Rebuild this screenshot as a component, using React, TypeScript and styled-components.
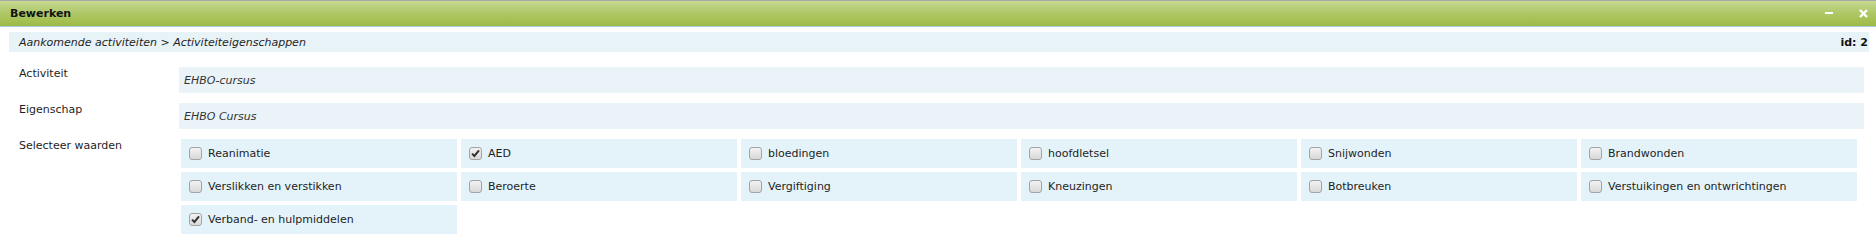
import React, { useState } from "react";
import styled, { createGlobalStyle } from "styled-components";

type Option = {
  id: number;
  name: string;
  isChecked: boolean;
};

const OptionDemo: Option[] = [
  { id: 1, name: "Reanimatie", isChecked: false },
  { id: 2, name: "AED", isChecked: true },
  { id: 3, name: "bloedingen", isChecked: false },
  { id: 4, name: "hoofdletsel", isChecked: false },
  { id: 5, name: "Snijwonden", isChecked: false },
  { id: 6, name: "Brandwonden", isChecked: false },
  { id: 7, name: "Verslikken en verstikken", isChecked: false },
  { id: 8, name: "Beroerte", isChecked: false },
  { id: 9, name: "Vergiftiging", isChecked: false },
  { id: 10, name: "Kneuzingen", isChecked: false },
  { id: 11, name: "Botbreuken", isChecked: false },
  { id: 12, name: "Verstuikingen en ontwrichtingen", isChecked: false },
  { id: 13, name: "Verband- en hulpmiddelen", isChecked: true },
];

const GlobalStyle = createGlobalStyle`
  html, body {
    margin: 0;
    padding: 0;
    background: #fff;
  }
  body {
    font-family: "DejaVu Sans", Verdana, sans-serif;
    font-size: 11px;
    color: #1e1e1e;
  }
`;

const Window = styled.div`
  width: 1876px;
`;

const TitleBar = styled.div`
  height: 25px;
  border-top: 1px solid #a9a9a9;
  border-bottom: 1px solid #a9cbe0;
  background: linear-gradient(to bottom, #c6da92 0%, #b0c96a 45%, #9dbb45 100%);
  display: flex;
  align-items: center;
  padding: 0 8px 0 10px;
`;

const Title = styled.div`
  flex: 1;
  font-weight: bold;
  font-size: 11px;
  color: #141414;
`;

const TitleControls = styled.div`
  display: flex;
  align-items: center;
  gap: 25px;
`;

const ControlButton = styled.span`
  display: flex;
  align-items: center;
  justify-content: center;
  width: 9px;
  height: 10px;
  cursor: pointer;
`;

const Content = styled.div`
  padding: 5px 7px 0 9px;
`;

const Breadcrumb = styled.div`
  height: 20px;
  background: #e8f3f8;
  display: flex;
  align-items: center;
  padding: 0 1px 0 10px;
`;

const BreadcrumbPath = styled.div`
  flex: 1;
  font-style: italic;
  color: #1e1e1e;
`;

const RecordId = styled.div`
  font-weight: bold;
  color: #111;
`;

const Form = styled.div`
  padding: 15px 0 0 10px;
  display: flex;
  flex-direction: column;
  gap: 10px;
`;

const FormRow = styled.div`
  display: grid;
  grid-template-columns: 160px 1fr;
`;

const FieldLabel = styled.div`
  padding-top: 0;
  line-height: 14px;
  color: #1e1e1e;
`;

const ReadOnlyField = styled.div`
  height: 26px;
  margin-right: 5px;
  background: #eaf3f7;
  display: flex;
  align-items: center;
  padding-left: 5px;
  font-style: italic;
  color: #333;
`;

const OptionGrid = styled.div`
  display: grid;
  grid-template-columns: repeat(6, 1fr);
  gap: 4px;
  margin: 0 12px 0 2px;
`;

const OptionCell = styled.label`
  height: 29px;
  background: #e4f3f9;
  display: flex;
  align-items: center;
  gap: 6px;
  padding-left: 8px;
  cursor: pointer;
  color: #1e1e1e;
`;

const HiddenInput = styled.input`
  display: none;
`;

const Box = styled.span`
  width: 11px;
  height: 11px;
  border: 1px solid #a3a3a3;
  border-radius: 3px;
  background: linear-gradient(to bottom, #f2f2f2, #d9d9d9);
  display: flex;
  align-items: center;
  justify-content: center;
  flex-shrink: 0;
`;

const CheckBox = ({
  checked,
  onChange,
}: {
  checked: boolean;
  onChange: (e: React.ChangeEvent<HTMLInputElement>) => void;
}) => (
  <>
    <HiddenInput type="checkbox" checked={checked} onChange={onChange} />
    <Box>
      {checked && (
        <svg width="9" height="9" viewBox="0 0 9 9">
          <path d="M1 4.6 L3.4 7 L8 1.4" stroke="#333" strokeWidth="2" fill="none" />
        </svg>
      )}
    </Box>
  </>
);

export default function App() {
  const [options, setOptions] = useState<Option[]>(OptionDemo);

  const handleCheck = (e: React.ChangeEvent<HTMLInputElement>, id: number) => {
    setOptions(options.map((o) => (o.id === id ? { ...o, isChecked: e.target.checked } : o)));
  };

  return (
    <>
      <GlobalStyle />
      <Window>
        <TitleBar>
          <Title>Bewerken</Title>
          <TitleControls>
            <ControlButton>
              <svg width="9" height="10" viewBox="0 0 9 10">
                <rect x="0" y="3" width="8" height="2" fill="#fff" />
              </svg>
            </ControlButton>
            <ControlButton>
              <svg width="9" height="9" viewBox="0 0 9 9">
                <path d="M1 1 L8 8 M8 1 L1 8" stroke="#fff" strokeWidth="2.4" />
              </svg>
            </ControlButton>
          </TitleControls>
        </TitleBar>
        <Content>
          <Breadcrumb>
            <BreadcrumbPath>Aankomende activiteiten &gt; Activiteiteigenschappen</BreadcrumbPath>
            <RecordId>id: 2</RecordId>
          </Breadcrumb>
          <Form>
            <FormRow>
              <FieldLabel>Activiteit</FieldLabel>
              <ReadOnlyField>EHBO-cursus</ReadOnlyField>
            </FormRow>
            <FormRow>
              <FieldLabel>Eigenschap</FieldLabel>
              <ReadOnlyField>EHBO Cursus</ReadOnlyField>
            </FormRow>
            <FormRow>
              <FieldLabel>Selecteer waarden</FieldLabel>
              <OptionGrid>
                {options.map((o) => (
                  <OptionCell key={o.id}>
                    <CheckBox checked={o.isChecked} onChange={(e) => handleCheck(e, o.id)} />
                    {o.name}
                  </OptionCell>
                ))}
              </OptionGrid>
            </FormRow>
          </Form>
        </Content>
      </Window>
    </>
  );
}
